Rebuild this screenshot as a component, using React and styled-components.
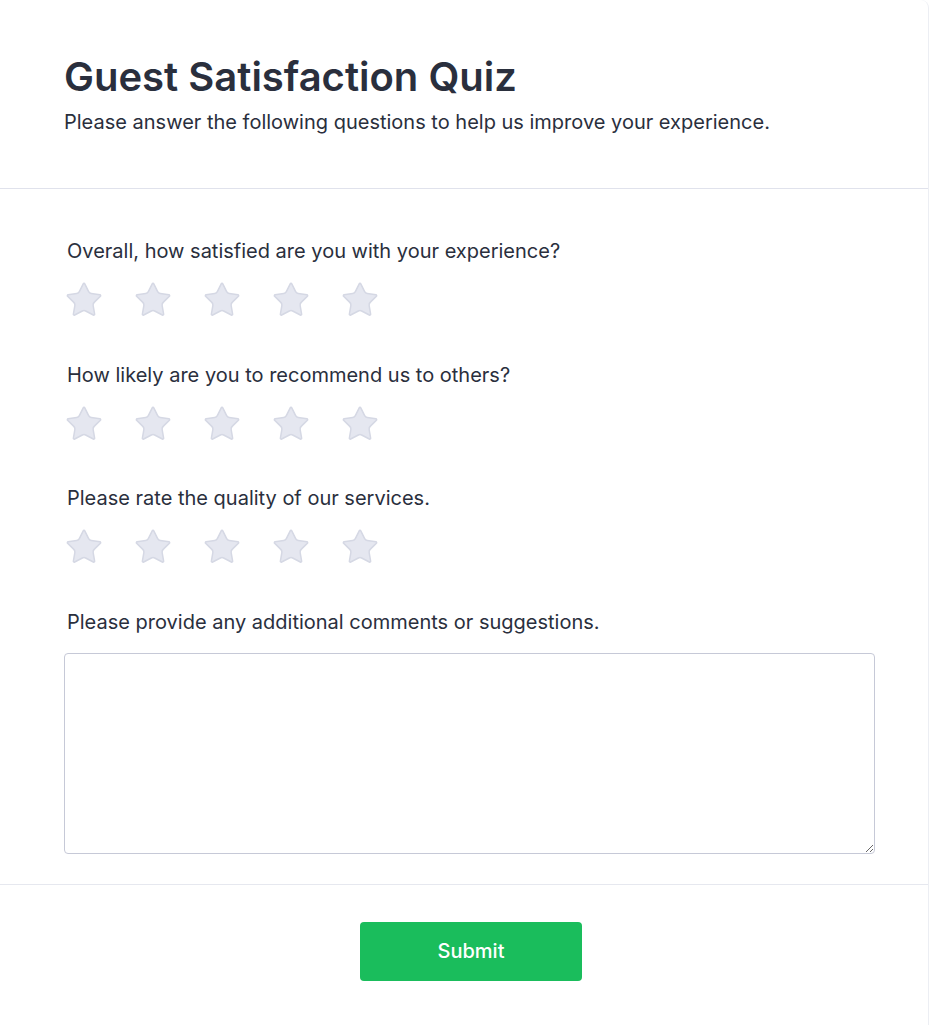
import React, { useState } from "react";
import styled, { createGlobalStyle } from "styled-components";

const GlobalStyle = createGlobalStyle`
  body {
    margin: 0;
    background: #ffffff;
    font-family: Inter, "Noto Sans", sans-serif;
  }
`;

const Card = styled.div`
  width: 929px;
  min-height: 1025px;
  background: #ffffff;
  border-right: 1px solid #eceef3;
  border-top-right-radius: 8px;
  box-sizing: border-box;
`;

const Header = styled.header`
  padding: 53px 64px 51px;
  border-bottom: 1px solid #e0e2ec;
`;

const Title = styled.h1`
  margin: 0;
  font-size: 40px;
  line-height: 48px;
  font-weight: 600;
  color: #2a2f3d;
`;

const Subtitle = styled.p`
  margin: 6px 0 0;
  font-size: 20px;
  line-height: 30px;
  color: #2a2f3d;
`;

const Body = styled.div`
  padding: 47px 55px 30px 64px;
  display: flex;
  flex-direction: column;
  gap: 39.5px;
`;

const Question = styled.div`
  display: flex;
  flex-direction: column;
  gap: ${(p) => (p.$tight ? "16px" : "14px")};
`;

const Label = styled.label`
  font-size: 20px;
  line-height: 30px;
  color: #2a2f3d;
  padding-left: 3px;
`;

const Stars = styled.div`
  display: flex;
  gap: 29px;
`;

const StarButton = styled.button`
  width: 40px;
  height: 40px;
  padding: 0;
  border: none;
  background: none;
  cursor: pointer;
  display: flex;
  align-items: center;
  justify-content: center;

  svg {
    display: block;
  }
`;

const TextArea = styled.textarea`
  box-sizing: border-box;
  width: 811px;
  height: 201px;
  border: 1px solid #c6c9d7;
  border-radius: 4px;
  padding: 10px 12px;
  font-family: inherit;
  font-size: 18px;
  color: #2a2f3d;
  outline: none;
`;

const Footer = styled.div`
  border-top: 1px solid #e6e8ef;
  padding: 37px 0 38px 14px;
  display: flex;
  justify-content: center;
`;

const SubmitButton = styled.button`
  width: 222px;
  height: 59px;
  border: none;
  border-radius: 4px;
  background: #1abd5c;
  color: #ffffff;
  font-family: inherit;
  font-size: 20px;
  font-weight: 500;
  cursor: pointer;
`;

const Star = ({ filled }) => (
  <svg width="40" height="40" viewBox="0 0 24 24">
    <path
      d="M11.525 2.295a.53.53 0 0 1 .95 0l2.31 4.679a2.123 2.123 0 0 0 1.595 1.16l5.166.756a.53.53 0 0 1 .294.904l-3.736 3.638a2.123 2.123 0 0 0-.611 1.878l.882 5.14a.53.53 0 0 1-.771.56l-4.618-2.428a2.122 2.122 0 0 0-1.973 0L6.396 21.01a.53.53 0 0 1-.77-.56l.881-5.139a2.122 2.122 0 0 0-.611-1.879L2.16 9.795a.53.53 0 0 1 .294-.906l5.165-.755a2.122 2.122 0 0 0 1.597-1.160z"
      fill={filled ? "#facc15" : "#e5e7f0"}
      stroke={filled ? "#eab308" : "#d5d8e4"}
      strokeWidth="0.9"
      strokeLinejoin="round"
    />
  </svg>
);

const questions = [
  "Overall, how satisfied are you with your experience?",
  "How likely are you to recommend us to others?",
  "Please rate the quality of our services.",
];

const Rating = ({ value, onChange }) => (
  <Stars>
    {[1, 2, 3, 4, 5].map((n) => (
      <StarButton key={n} type="button" onClick={() => onChange(n)}>
        <Star filled={n <= value} />
      </StarButton>
    ))}
  </Stars>
);

const App = () => {
  const [ratings, setRatings] = useState([0, 0, 0]);
  const [comments, setComments] = useState("");

  const setRating = (i, n) => {
    const next = [...ratings];
    next[i] = n;
    setRatings(next);
  };

  return (
    <>
      <GlobalStyle />
      <Card>
        <Header>
          <Title>Guest Satisfaction Quiz</Title>
          <Subtitle>
            Please answer the following questions to help us improve your experience.
          </Subtitle>
        </Header>
        <Body>
          {questions.map((q, i) => (
            <Question key={q}>
              <Label>{q}</Label>
              <Rating value={ratings[i]} onChange={(n) => setRating(i, n)} />
            </Question>
          ))}
          <Question $tight>
            <Label htmlFor="comments">
              Please provide any additional comments or suggestions.
            </Label>
            <TextArea
              id="comments"
              value={comments}
              onChange={(e) => setComments(e.target.value)}
            />
          </Question>
        </Body>
        <Footer>
          <SubmitButton type="submit">Submit</SubmitButton>
        </Footer>
      </Card>
    </>
  );
};

export default App;
